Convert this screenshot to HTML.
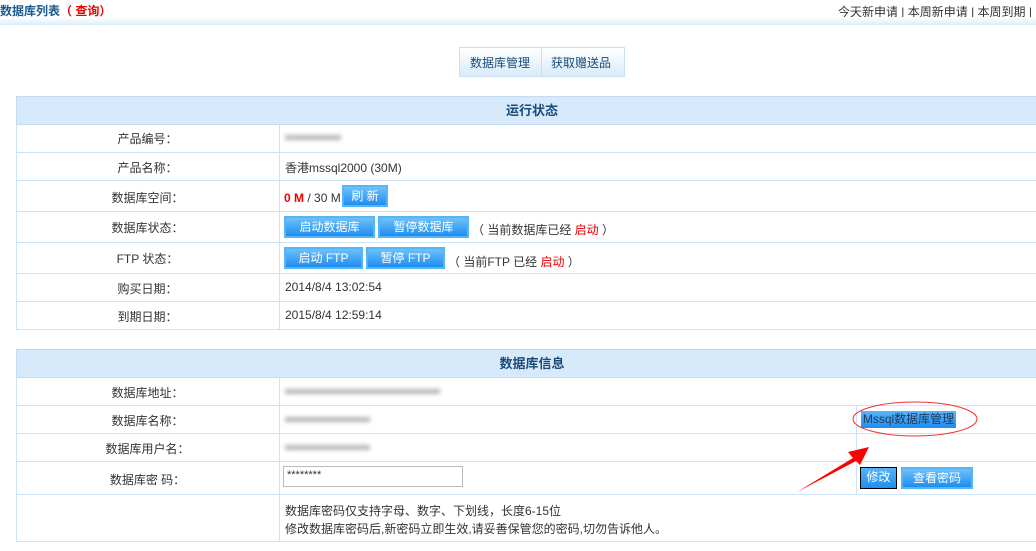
<!DOCTYPE html><html><head><meta charset="utf-8"><style>
body{margin:0;width:1036px;height:551px;overflow:hidden;background:#fff;font-family:"Liberation Sans","Noto Sans CJK SC",sans-serif;font-size:12px;color:#333;position:relative}
.a{position:absolute}
.h{background:#d6eafc;border:1px solid #c3dcf3;color:#1b4a75;font-weight:bold;text-align:center;line-height:27px;font-size:13px}
.hl{height:1px;background:#cfe3f7}
.vl{width:1px;background:#cfe3f7}
.lb{width:263px;text-align:center}
.btn{background:linear-gradient(#6ec0fb,#1e8ef0);border:2px solid #55b5f5;color:#fff;text-align:center;box-sizing:border-box;font-size:12px}
.blur{background:#999;filter:blur(2px);height:5px;opacity:.7}
.red{color:#e00}
</style></head><body>
<div class="a" style="left:0;top:2px;color:#1b5a8a;font-weight:bold;font-size:12px">数据库列表<span class="red">（ 查询）</span></div>
<div class="a" style="right:4px;top:3px">今天新申请 | 本周新申请 | 本周到期 |</div>
<div class="a" style="left:0;top:17px;width:1036px;height:8px;background:linear-gradient(#fff,#dbeefb)"></div>
<div class="a" style="left:459px;top:47px;width:164px;height:28px;border:1px solid #c9dff3;background:linear-gradient(#fff,#d8ebf9)"></div>
<div class="a vl" style="left:541px;top:47px;height:30px;background:#c9dff3"></div>
<div class="a" style="left:470px;top:54px;color:#1b4a75">数据库管理</div>
<div class="a" style="left:551px;top:54px;color:#1b4a75">获取赠送品</div>

<div class="a h" style="left:16px;top:96px;width:1030px;height:27px">运行状态</div>
<div class="a vl" style="left:16px;top:124px;height:205px"></div>
<div class="a vl" style="left:279px;top:124px;height:205px"></div>
<div class="a hl" style="left:16px;top:152px;width:1020px"></div>
<div class="a hl" style="left:16px;top:180px;width:1020px"></div>
<div class="a hl" style="left:16px;top:211px;width:1020px"></div>
<div class="a hl" style="left:16px;top:242px;width:1020px"></div>
<div class="a hl" style="left:16px;top:273px;width:1020px"></div>
<div class="a hl" style="left:16px;top:301px;width:1020px"></div>
<div class="a hl" style="left:16px;top:329px;width:1020px"></div>
<div class="a lb" style="left:16px;top:130px">产品编号：</div>
<div class="a lb" style="left:16px;top:159px">产品名称：</div>
<div class="a lb" style="left:16px;top:189px">数据库空间：</div>
<div class="a lb" style="left:16px;top:219px">数据库状态：</div>
<div class="a lb" style="left:16px;top:250px">FTP 状态：</div>
<div class="a lb" style="left:16px;top:280px">购买日期：</div>
<div class="a lb" style="left:16px;top:308px">到期日期：</div>
<div class="a blur" style="left:285px;top:135px;width:56px"></div>
<div class="a" style="left:285px;top:159px">香港mssql2000 (30M)</div>
<div class="a" style="left:284px;top:191px"><b class="red">0 M</b> / 30 M</div>
<div class="a btn" style="left:342px;top:185px;width:46px;height:22px;line-height:18px">刷 新</div>
<div class="a btn" style="left:284px;top:216px;width:91px;height:22px;line-height:18px">启动数据库</div>
<div class="a btn" style="left:378px;top:216px;width:91px;height:22px;line-height:18px">暂停数据库</div>
<div class="a" style="left:472px;top:221px">（ 当前数据库已经 <span class="red">启动</span> ）</div>
<div class="a btn" style="left:284px;top:247px;width:79px;height:22px;line-height:18px">启动 FTP</div>
<div class="a btn" style="left:366px;top:247px;width:79px;height:22px;line-height:18px">暂停 FTP</div>
<div class="a" style="left:448px;top:253px">（ 当前FTP 已经 <span class="red">启动</span> ）</div>
<div class="a" style="left:285px;top:280px">2014/8/4 13:02:54</div>
<div class="a" style="left:285px;top:308px">2015/8/4 12:59:14</div>

<div class="a h" style="left:16px;top:349px;width:1030px;height:27px">数据库信息</div>
<div class="a vl" style="left:16px;top:377px;height:164px"></div>
<div class="a vl" style="left:279px;top:377px;height:164px"></div>
<div class="a vl" style="left:856px;top:405px;height:89px"></div>
<div class="a hl" style="left:16px;top:405px;width:1020px"></div>
<div class="a hl" style="left:16px;top:433px;width:1020px"></div>
<div class="a hl" style="left:16px;top:461px;width:1020px"></div>
<div class="a hl" style="left:16px;top:494px;width:1020px"></div>
<div class="a hl" style="left:16px;top:541px;width:1020px"></div>
<div class="a lb" style="left:16px;top:384px">数据库地址：</div>
<div class="a lb" style="left:16px;top:412px">数据库名称：</div>
<div class="a lb" style="left:16px;top:440px">数据库用户名：</div>
<div class="a lb" style="left:16px;top:471px">数据库密 码：</div>
<div class="a blur" style="left:285px;top:389px;width:155px"></div>
<div class="a blur" style="left:285px;top:417px;width:85px"></div>
<div class="a blur" style="left:285px;top:445px;width:85px"></div>
<div class="a" style="left:283px;top:466px;width:180px;height:21px;border:1px solid #bbb;line-height:16px;padding-left:3px;box-sizing:border-box;font-size:11px">********</div>
<div class="a" style="left:861px;top:411px;width:95px;height:17px;background:linear-gradient(#5ab3f8,#1e8ef0);color:#1b3a5a;line-height:17px;text-align:center">Mssql数据库管理</div>
<svg class="a" style="left:790px;top:400px" width="200" height="100"><ellipse cx="125" cy="19" rx="62" ry="17" fill="none" stroke="#e33" stroke-width="1"/><path d="M7 92 L63 58 L58 52 L79 47 L70 65 L66 61 Z" fill="#f00"/></svg>
<div class="a btn" style="left:860px;top:467px;width:37px;height:22px;line-height:18px;border:1px solid #000;background:linear-gradient(#5ab3f8,#1e8ef0)">修改</div>
<div class="a btn" style="left:901px;top:467px;width:72px;height:22px;line-height:18px">查看密码</div>
<div class="a" style="left:285px;top:502px;line-height:18px">数据库密码仅支持字母、数字、下划线，长度6-15位<br>修改数据库密码后,新密码立即生效,请妥善保管您的密码,切勿告诉他人。</div>
</body></html>
